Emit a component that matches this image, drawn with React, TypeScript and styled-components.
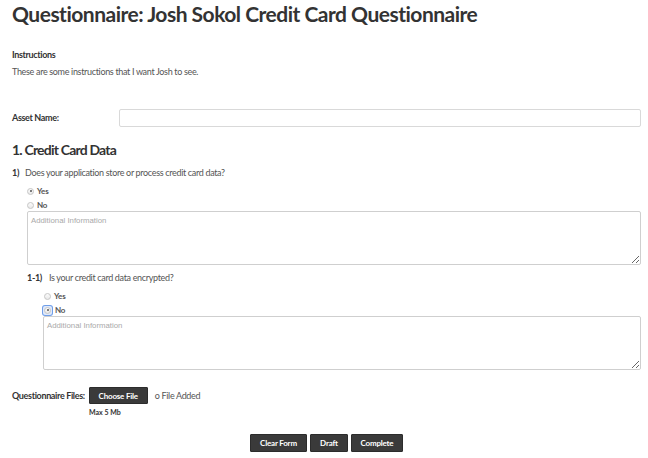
import React from "react";
import styled, { createGlobalStyle } from "styled-components";

const Global = createGlobalStyle`
  html, body { margin: 0; padding: 0; background: #fff; }
  body { font-family: Lato, "Liberation Sans", sans-serif; color: #555; }
  * { box-sizing: border-box; }
`;

const Page = styled.div`
  padding: 1px 7px 0 12px;
  width: 648px;
`;

const Title = styled.h1`
  margin: 0;
  font-size: 21px;
  line-height: 26px;
  font-weight: 700;
  letter-spacing: -0.5px;
  color: #333;
`;

const Label = styled.div<{ $top?: number; $width?: number }>`
  margin-top: ${(p) => p.$top ?? 0}px;
  font-size: 9px;
  line-height: 12px;
  font-weight: 700;
  letter-spacing: -0.35px;
  color: #333;
  white-space: nowrap;
  ${(p) => (p.$width ? `width: ${p.$width}px; flex: none;` : "")}
`;

const BodyText = styled.div<{ $top?: number }>`
  margin-top: ${(p) => p.$top ?? 0}px;
  font-size: 9px;
  line-height: 12px;
  letter-spacing: -0.33px;
  color: #555;
  white-space: nowrap;
`;

const FieldRow = styled.div`
  margin-top: 31px;
  display: flex;
  align-items: center;
  height: 18px;
`;

const TextInput = styled.input`
  flex: 1;
  height: 18px;
  border: 1px solid #d9d9d9;
  border-radius: 2px;
  background: #fff;
  outline: none;
`;

const SectionTitle = styled.h2`
  margin: 14px 0 0;
  font-size: 14px;
  line-height: 18px;
  font-weight: 700;
  letter-spacing: -0.8px;
  color: #333;
`;

const QuestionLine = styled.div<{ $top: number }>`
  margin-top: ${(p) => p.$top}px;
  display: flex;
  align-items: center;
  height: 12px;
  font-size: 9px;
  letter-spacing: -0.33px;
  color: #555;
  white-space: nowrap;
`;

const QNum = styled.span<{ $width: number }>`
  width: ${(p) => p.$width}px;
  flex: none;
  font-weight: 700;
  color: #333;
`;

const Block = styled.div<{ $indent: number }>`
  padding-left: ${(p) => p.$indent}px;
`;

const Options = styled.div<{ $top: number; $indent: number }>`
  margin-top: ${(p) => p.$top}px;
  padding-left: ${(p) => p.$indent}px;
  display: flex;
  flex-direction: column;
  gap: 2px;
`;

const Option = styled.label<{ $labelGap: number }>`
  display: flex;
  align-items: center;
  gap: ${(p) => p.$labelGap}px;
  height: 12px;
  font-size: 8px;
  font-weight: 700;
  letter-spacing: -0.2px;
  color: #555;
`;

const Circle = styled.span<{ $checked?: boolean }>`
  position: relative;
  display: block;
  width: 7px;
  height: 7px;
  border-radius: 50%;
  border: 1px solid #c6c6c6;
  background: linear-gradient(#fbfbfb, #e9e9e9);
  &::after {
    content: "";
    display: ${(p) => (p.$checked ? "block" : "none")};
    position: absolute;
    left: 1.5px;
    top: 1.5px;
    width: 2px;
    height: 2px;
    border-radius: 50%;
    background: #555;
  }
`;

const FocusRing = styled.span<{ $focused?: boolean }>`
  display: flex;
  align-items: center;
  justify-content: center;
  width: ${(p) => (p.$focused ? 9 : 7)}px;
  height: ${(p) => (p.$focused ? 9 : 7)}px;
  margin-left: ${(p) => (p.$focused ? -1 : 0)}px;
  border-radius: 2px;
  ${(p) => (p.$focused ? "box-shadow: 0 0 0 1px #6f9ee8; background: #dfe9fb;" : "")}
`;

const Notes = styled.textarea`
  display: block;
  width: 100%;
  height: 54px;
  margin: 0;
  padding: 4px 3px;
  border: 1px solid #cfcfcf;
  border-radius: 2px;
  font-family: "Liberation Sans", Arial, sans-serif;
  font-size: 7.8px;
  color: #555;
  resize: vertical;
  outline: none;
  &::placeholder { color: #a9a9a9; }
`;

const FilesRow = styled.div`
  margin-top: 17px;
  display: flex;
  align-items: center;
  gap: 4px;
`;

const DarkButton = styled.button<{ $width: number }>`
  width: ${(p) => p.$width}px;
  height: 17px;
  padding: 0;
  border: 1px solid #2c2c2c;
  border-radius: 1px;
  background: #3a3a3a;
  color: #fff;
  font-family: Lato, "Liberation Sans", sans-serif;
  font-size: 8px;
  font-weight: 700;
  letter-spacing: -0.2px;
  cursor: pointer;
`;

const FileStatus = styled.span`
  margin-left: 3px;
  font-size: 9px;
  letter-spacing: -0.33px;
  color: #555;
`;

const Hint = styled.div`
  margin-top: 2px;
  padding-left: 77px;
  font-size: 7px;
  line-height: 12px;
  font-weight: 700;
  color: #333;
`;

const Actions = styled.div`
  margin-top: 16px;
  display: flex;
  justify-content: center;
  gap: 3px;
`;

const ActionButton = styled(DarkButton)`
  height: 18px;
`;

type Opt = { text: string; checked?: boolean; focused?: boolean };

function RadioGroup({ top, indent, labelGap, options }: { top: number; indent: number; labelGap: number; options: Opt[] }) {
  return (
    <Options $top={top} $indent={indent}>
      {options.map((o) => (
        <Option key={o.text} $labelGap={labelGap}>
          <FocusRing $focused={o.focused}>
            <Circle $checked={o.checked} />
          </FocusRing>
          {o.text}
        </Option>
      ))}
    </Options>
  );
}

export default function App() {
  return (
    <Page>
      <Global />
      <Title>Questionnaire: Josh Sokol Credit Card Questionnaire</Title>
      <Label $top={22}>Instructions</Label>
      <BodyText $top={5}>These are some instructions that I want Josh to see.</BodyText>

      <FieldRow>
        <Label $width={107}>Asset Name:</Label>
        <TextInput type="text" />
      </FieldRow>

      <SectionTitle>1. Credit Card Data</SectionTitle>

      <QuestionLine $top={7}>
        <QNum $width={13}>1)</QNum>
        Does your application store or process credit card data?
      </QuestionLine>
      <RadioGroup
        top={7}
        indent={15}
        labelGap={3}
        options={[{ text: "Yes", checked: true }, { text: "No" }]}
      />
      <Block $indent={15}>
        <Notes placeholder="Additional Information" />
        <QuestionLine $top={6}>
          <QNum $width={22}>1-1)</QNum>
          Is your credit card data encrypted?
        </QuestionLine>
        <RadioGroup
          top={7}
          indent={17}
          labelGap={3}
          options={[{ text: "Yes" }, { text: "No", checked: true, focused: true }]}
        />
        <Block $indent={16}>
          <Notes placeholder="Additional Information" />
        </Block>
      </Block>

      <FilesRow>
        <Label>Questionnaire Files:</Label>
        <DarkButton $width={59}>Choose File</DarkButton>
        <FileStatus>o File Added</FileStatus>
      </FilesRow>
      <Hint>Max 5 Mb</Hint>

      <Actions>
        <ActionButton $width={57}>Clear Form</ActionButton>
        <ActionButton $width={38}>Draft</ActionButton>
        <ActionButton $width={52}>Complete</ActionButton>
      </Actions>
    </Page>
  );
}
